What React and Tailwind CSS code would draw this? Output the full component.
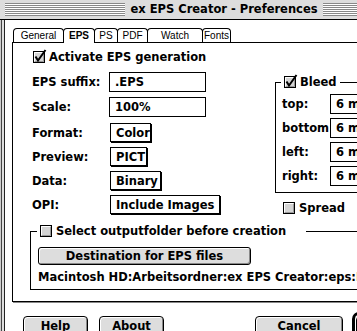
import React from "react";

const stripes =
  "h-[13px] bg-[repeating-linear-gradient(to_bottom,#888_0px,#888_1px,#fff_1px,#fff_2px)]";

function CheckBox({ checked }) {
  return (
    <svg width="12" height="12" viewBox="0 0 12 12" className="shrink-0 overflow-visible">
      <rect x="0.5" y="0.5" width="11" height="11" fill="#d4d4d4" stroke="#000" />
      <path d="M1.5 10V1.5H10" stroke="#fff" fill="none" />
      <path d="M2 10.5H10.5V2" stroke="#999" fill="none" />
      {checked && (
        <path d="M2.5 5.5L5 9.5L12.5 -1" stroke="#000" strokeWidth="2" fill="none" />
      )}
    </svg>
  );
}

function TextBox({ value, className }) {
  return (
    <div className={`h-[20px] border border-black bg-white flex items-center pl-[5px] whitespace-nowrap overflow-hidden ${className}`}>
      {value}
    </div>
  );
}

function Popup({ value, className }) {
  return (
    <div className={`ml-px h-[19px] border border-black bg-white shadow-[1px_1px_0_#000] flex items-center pl-[5px] whitespace-nowrap ${className}`}>
      {value}
    </div>
  );
}

function Button({ label, className }) {
  return (
    <div className={`h-[20px] rounded-[4px] border border-black bg-[#ddd] shadow-[inset_1px_1px_0_#fff,inset_-1px_-1px_0_#888] flex items-center justify-center shrink-0 ${className}`}>
      {label}
    </div>
  );
}

const tabs = [
  { label: "General", w: "w-[51px]" },
  { label: "EPS", w: "w-[32px]", active: true },
  { label: "PS", w: "w-[24px]" },
  { label: "PDF", w: "w-[31px]" },
  { label: "Watch", w: "w-[56px]" },
  { label: "Fonts", w: "w-[29px]" },
];

const rows = [
  { label: "EPS suffix:", h: "h-[25px]", field: <TextBox value=".EPS" className="w-[97px]" /> },
  { label: "Scale:", h: "h-[26px]", field: <TextBox value="100%" className="w-[97px]" /> },
  { label: "Format:", h: "h-[24px]", field: <Popup value="Color" className="w-[41px]" /> },
  { label: "Preview:", h: "h-[24px]", field: <Popup value="PICT" className="w-[37px]" /> },
  { label: "Data:", h: "h-[24px]", field: <Popup value="Binary" className="w-[51px]" /> },
  { label: "OPI:", h: "h-[24px]", field: <Popup value="Include Images" className="w-[110px]" /> },
];

const bleed = ["top:", "bottom", "left:", "right:"];

export default function App() {
  return (
    <div className="w-[357px] h-[331px] overflow-hidden bg-white text-black font-['DejaVu_Sans',sans-serif] text-[11.5px] font-bold leading-[14px] flex flex-col">

      {/* TITLE BAR */}
      <div className="h-[20px] shrink-0 bg-[#ddd] border-b border-black flex items-start">
        <div className="w-[5px] shrink-0" />
        <div className={`mt-[3px] w-[120px] shrink-0 ${stripes}`} />
        <div className="w-[198px] shrink-0 text-center leading-[19px] whitespace-nowrap">
          ex EPS Creator - Preferences
        </div>
        <div className={`mt-[3px] w-[40px] shrink-0 ${stripes}`} />
      </div>

      {/* BODY */}
      <div className="flex flex-1">

        {/* left frame */}
        <div className="w-[5px] shrink-0 flex">
          <div className="w-px bg-[#ccc]" />
          <div className="w-px bg-[#444]" />
          <div className="w-[2px] bg-[#ddd]" />
          <div className="w-px bg-[#222]" />
        </div>

        <div className="flex flex-col flex-1">

          {/* Tabs */}
          <div className="ml-[8px] mt-[8px] flex h-[15px] relative z-10 shrink-0">
            {tabs.map((t, i) => (
              <div
                key={t.label}
                className={`${t.w} ${i > 0 ? "-ml-px" : ""} h-[15px] border-t border-l border-r border-black rounded-t-[4px] flex items-center justify-center font-['Liberation_Sans',sans-serif] text-[10px] ${t.active ? "bg-white font-bold" : "font-normal"}`}
              >
                {t.label}
              </div>
            ))}
          </div>

          {/* Panel */}
          <div className="ml-[7px] -mt-px w-[420px] h-[260px] shrink-0 border border-black shadow-[1px_1px_0_#888] flex flex-col">

            <div className="ml-[20px] mt-[8px] h-[12px] flex items-center gap-[4px] whitespace-nowrap">
              <CheckBox checked />
              <span>Activate EPS generation</span>
            </div>

            <div className="flex mt-[9px]">

              {/* Left column */}
              <div className="ml-[19px] w-[243px] shrink-0 flex flex-col">
                {rows.map((r) => (
                  <div key={r.label} className={`${r.h} flex items-start`}>
                    <div className="w-[77px] h-[20px] flex items-center whitespace-nowrap">{r.label}</div>
                    {r.field}
                  </div>
                ))}
              </div>

              {/* Bleed */}
              <div className="flex flex-col">
                <div className="mt-[10px] w-[140px] h-[111px] border border-black flex flex-col">
                  <div className="-mt-[8px] ml-[5px] px-[3px] h-[14px] w-fit bg-white flex items-center gap-[4px]">
                    <CheckBox checked />
                    <span>Bleed</span>
                  </div>
                  <div className="mt-[5px] flex flex-col">
                    {bleed.map((b) => (
                      <div key={b} className="h-[24px] flex items-start pl-[6px]">
                        <div className="w-[48px] h-[20px] flex items-center">{b}</div>
                        <TextBox value="6 mm" className="w-[60px]" />
                      </div>
                    ))}
                  </div>
                </div>
                <div className="mt-[9px] ml-[8px] h-[12px] flex items-center gap-[4px]">
                  <CheckBox />
                  <span>Spread</span>
                </div>
              </div>
            </div>

            {/* Output folder */}
            <div className="ml-[17px] mt-[12px] w-[400px] h-[59px] shrink-0 border border-black flex flex-col">
              <div className="-mt-[8px] ml-[6px] pl-[3px] pr-[20px] h-[14px] w-fit bg-white flex items-center gap-[4px] whitespace-nowrap">
                <CheckBox />
                <span>Select outputfolder before creation</span>
              </div>
              <div className="ml-[7px] mt-[9px] w-[213px] h-[18px] rounded-[3px] border border-black bg-[#ddd] shadow-[inset_1px_1px_0_#fff,inset_-1px_-1px_0_#888] flex items-center justify-center whitespace-nowrap">
                Destination for EPS files
              </div>
              <div className="ml-[7px] mt-[5px] h-[14px] whitespace-nowrap">
                Macintosh HD:Arbeitsordner:ex EPS Creator:eps:I
              </div>
            </div>
          </div>

          {/* Buttons */}
          <div className="flex items-start mt-[14px]">
            <Button label="Help" className="ml-[18px] w-[65px]" />
            <Button label="About" className="ml-[11px] w-[65px]" />
            <Button label="Cancel" className="ml-[91px] w-[88px]" />
            <div className="ml-[9px] -mt-[4px] w-[70px] h-[28px] shrink-0 rounded-[7px] border-[3px] border-black p-px">
              <div className="h-full rounded-[4px] border border-black bg-[#ddd] flex items-center justify-center">OK</div>
            </div>
          </div>
        </div>
      </div>
    </div>
  );
}
